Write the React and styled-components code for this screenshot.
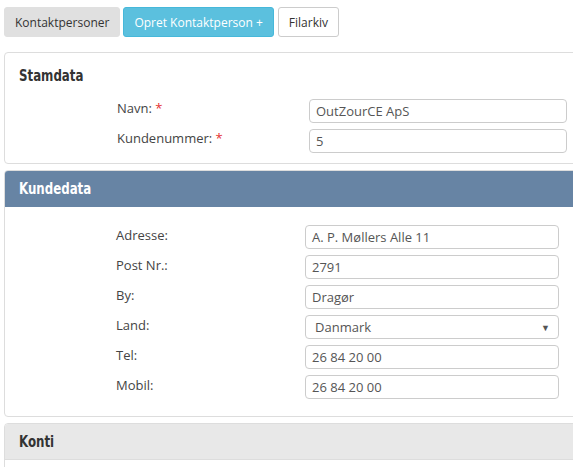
import React from "react";
import styled, { createGlobalStyle } from "styled-components";

const stamdata = [
  { label: "Navn:", value: "OutZourCE ApS", required: true },
  { label: "Kundenummer:", value: "5", required: true },
];

const kundedata = [
  { label: "Adresse:", value: "A. P. Møllers Alle 11" },
  { label: "Post Nr.:", value: "2791" },
  { label: "By:", value: "Dragør" },
  { label: "Land:", value: "Danmark", select: true },
  { label: "Tel:", value: "26 84 20 00" },
  { label: "Mobil:", value: "26 84 20 00" },
];

const App = () => (
  <>
    <GlobalStyle />
    <Page>
      <Toolbar>
        <Button>Kontaktpersoner</Button>
        <Button $variant="info">Opret Kontaktperson +</Button>
        <Button $variant="white">Filarkiv</Button>
      </Toolbar>

      <Panel $mt={15}>
        <PlainHeading>
          <Title>Stamdata</Title>
        </PlainHeading>
        <Form $labelCol={112} $inputLeft={304} $inputWidth={258} $pad="8px 0 10px">
          {stamdata.map((row) => (
            <Row key={row.label}>
              <Label $top={-3}>
                {row.label} {row.required && <Req>*</Req>}
              </Label>
              <Input>{row.value}</Input>
            </Row>
          ))}
        </Form>
      </Panel>

      <Panel $mt={6}>
        <Heading $tone="blue">
          <Title>Kundedata</Title>
        </Heading>
        <Form $labelCol={111} $inputLeft={300} $inputWidth={254} $pad="18px 0 17px" $gap={6}>
          {kundedata.map((row) => (
            <Row key={row.label}>
              <Label $top={-2}>{row.label}</Label>
              <Input $select={row.select}>
                {row.value}
                {row.select && <Caret>▼</Caret>}
              </Input>
            </Row>
          ))}
        </Form>
      </Panel>

      <Panel $mt={6}>
        <Heading $tone="gray">
          <Title>Konti</Title>
        </Heading>
        <Spacer />
      </Panel>
    </Page>
  </>
);

const GlobalStyle = createGlobalStyle`
  html, body {
    margin: 0;
    background: #fff;
    overflow: hidden;
  }
  body {
    font-family: "Open Sans", "Liberation Sans", sans-serif;
    color: #333;
  }
`;

const Page = styled.div`
  padding: 7px 0 0 4px;
  width: 600px;
`;

const Toolbar = styled.div`
  display: flex;
  gap: 3px;
`;

const Button = styled.button`
  height: 30px;
  padding: 0 10px;
  font-family: inherit;
  font-size: 12px;
  border-radius: 3px;
  border: 1px solid ${(p) =>
    p.$variant === "info" ? "#46b8da" : p.$variant === "white" ? "#ccc" : "#e0e0e0"};
  background: ${(p) =>
    p.$variant === "info" ? "#5bc0de" : p.$variant === "white" ? "#fff" : "#e0e0e0"};
  color: ${(p) => (p.$variant === "info" ? "#fff" : "#333")};
  margin-right: ${(p) => (p.$variant === "info" ? "1px" : "0")};
`;

const Panel = styled.section`
  margin-top: ${(p) => p.$mt}px;
  border: 1px solid #ddd;
  border-radius: 4px;
  background: #fff;
  overflow: hidden;
`;

const Title = styled.span`
  display: inline-block;
  font-family: "DejaVu Sans", sans-serif;
  font-stretch: condensed;
  font-weight: bold;
  font-size: 16px;
  line-height: 20px;
  transform: scaleX(0.82);
  transform-origin: left center;
`;

const PlainHeading = styled.h3`
  margin: 0;
  height: 20px;
  display: flex;
  align-items: center;
  padding: 13px 14px 5px;
  color: #333;
`;

const Heading = styled.h3`
  margin: 0;
  height: 35px;
  display: flex;
  align-items: center;
  padding: 0 14px;
  background: ${(p) => (p.$tone === "blue" ? "#6784a4" : "#e8e8e8")};
  color: ${(p) => (p.$tone === "blue" ? "#fff" : "#333")};
  border-bottom: 1px solid ${(p) => (p.$tone === "blue" ? "#6784a4" : "#ddd")};
`;

const Form = styled.div`
  display: grid;
  grid-template-columns: ${(p) => p.$inputLeft - p.$labelCol}px ${(p) => p.$inputWidth}px;
  padding: ${(p) => p.$pad};
  padding-left: ${(p) => p.$labelCol}px;
  row-gap: ${(p) => p.$gap || 6}px;
`;

const Row = styled.div`
  display: contents;
`;

const Label = styled.label`
  font-size: 13px;
  color: #444;
  position: relative;
  top: ${(p) => p.$top || 0}px;
  line-height: 24px;
`;

const Req = styled.span`
  color: #e53030;
`;

const Input = styled.div`
  box-sizing: border-box;
  height: 24px;
  display: flex;
  align-items: center;
  justify-content: space-between;
  padding: 0 ${(p) => (p.$select ? "8px 0 9px" : "6px")};
  border: 1px solid #ccc;
  border-radius: 4px;
  font-size: 13px;
  color: #555;
`;

const Caret = styled.span`
  font-size: 9px;
  color: #555;
`;

const Spacer = styled.div`
  height: 40px;
`;

export default App;
